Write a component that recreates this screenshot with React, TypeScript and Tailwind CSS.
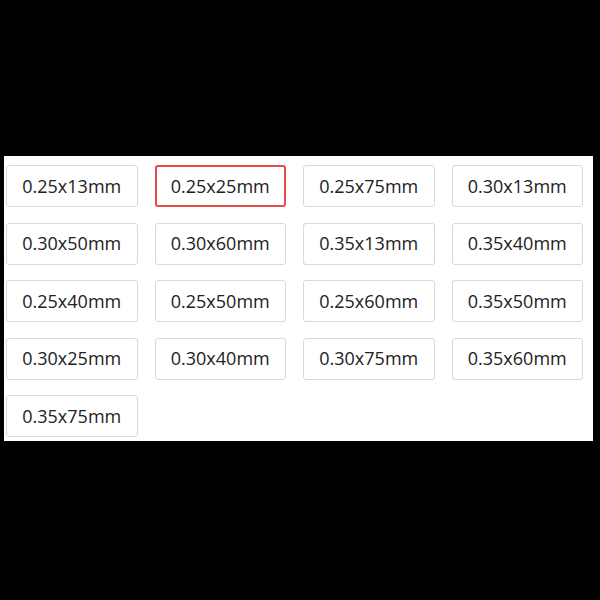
const sizes = [
  '0.25x13mm', '0.25x25mm', '0.25x75mm', '0.30x13mm',
  '0.30x50mm', '0.30x60mm', '0.35x13mm', '0.35x40mm',
  '0.25x40mm', '0.25x50mm', '0.25x60mm', '0.35x50mm',
  '0.30x25mm', '0.30x40mm', '0.30x75mm', '0.35x60mm',
  '0.35x75mm',
];

export default function App() {
  const selected = '0.25x25mm';

  return (
    <div className="w-[600px] h-[600px] bg-black flex flex-col pt-[156px] pl-[4px]">
      <div className="w-[589px] h-[285px] bg-white pt-[9px] pb-[4px] pl-[2px] flex flex-wrap content-start gap-x-[17px] gap-y-[15.5px]">
        {sizes.map((s) => (
          <button
            key={s}
            className={`w-[131.5px] h-[42px] rounded-[3px] bg-white text-[18px] text-[#222] flex items-center justify-center ${
              s === selected
                ? 'border-2 border-[#e84a4a]'
                : 'border border-[#d9d9d9]'
            }`}
            style={{ fontFamily: '"Open Sans", sans-serif' }}
          >
            {s}
          </button>
        ))}
      </div>
    </div>
  );
}
